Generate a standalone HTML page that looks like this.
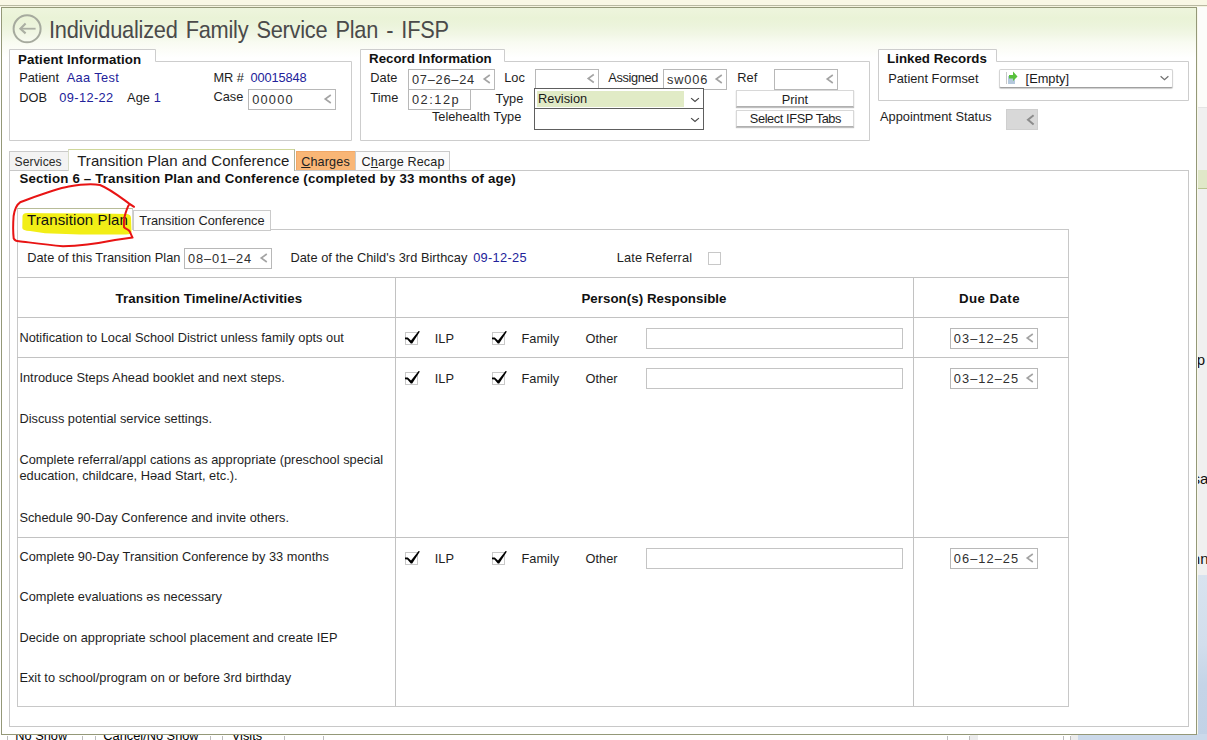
<!DOCTYPE html>
<html><head><meta charset="utf-8"><style>
html,body{margin:0;padding:0;}
body{width:1207px;height:740px;overflow:hidden;position:relative;background:#fff;font-family:"Liberation Sans", sans-serif;}
.t{position:absolute;white-space:nowrap;}
.r{position:absolute;box-sizing:border-box;}
.f{position:absolute;}
svg.s{position:absolute;left:0;top:0;}
</style></head><body>
<div class="f" style="left:0;top:0;width:1207px;height:5px;background:#f9f7e5"></div>
<div class="f" style="left:0px;top:5px;width:1207px;height:1px;background:#b9b9a2;"></div>
<div class="f" style="left:0px;top:6px;width:1207px;height:1px;background:#f6f4e0;"></div>
<div class="f" style="left:1197px;top:7px;width:10px;height:100px;background:#fcfcfa;"></div>
<div class="f" style="left:1197px;top:107px;width:10px;height:1px;background:#e4e4e4;"></div>
<div class="f" style="left:1197px;top:108px;width:10px;height:62px;background:#f0f0f0;"></div>
<div class="f" style="left:1197px;top:170px;width:10px;height:18px;background:#e0e8c8;"></div>
<div class="f" style="left:1197px;top:188px;width:10px;height:1px;background:#b8c490;"></div>
<div class="f" style="left:1197px;top:189px;width:10px;height:386px;background:#f0f0f0;"></div>
<div class="f" style="left:1197px;top:575px;width:10px;height:165px;background:linear-gradient(#d8e3ef 0px,#d2deec 70px,#c4d4e7 110px,#c2d2e6 165px);"></div>
<div class="f" style="left:1197px;top:300px;width:10px;height:275px;overflow:hidden"><div class="t" style="left:-0.2px;top:51.5px;font-size:15px;line-height:15px;color:#111">p</div><div class="t" style="left:-4.6px;top:171.3px;font-size:15px;line-height:15px;color:#111">sa</div><div class="t" style="left:-5.2px;top:251px;font-size:15px;line-height:15px;color:#111">nn</div></div>
<div class="f" style="left:0px;top:734px;width:1207px;height:6px;background:#ffffff;"></div>
<div class="f" style="left:1078px;top:734px;width:129px;height:6px;background:#cbd9ea;"></div>
<div class="f" style="left:7px;top:736px;width:1px;height:4px;background:#bcbcbc;"></div>
<div class="f" style="left:82px;top:736px;width:1px;height:4px;background:#bcbcbc;"></div>
<div class="f" style="left:95px;top:736px;width:1px;height:4px;background:#bcbcbc;"></div>
<div class="f" style="left:210px;top:736px;width:1px;height:4px;background:#bcbcbc;"></div>
<div class="f" style="left:222px;top:736px;width:1px;height:4px;background:#bcbcbc;"></div>
<div class="f" style="left:284px;top:736px;width:1px;height:4px;background:#bcbcbc;"></div>
<div class="f" style="left:323px;top:736px;width:1px;height:4px;background:#bcbcbc;"></div>
<div class="f" style="left:947px;top:736px;width:1px;height:4px;background:#bcbcbc;"></div>
<div class="f" style="left:969px;top:736px;width:1px;height:4px;background:#bcbcbc;"></div>
<div class="f" style="left:1063px;top:736px;width:1px;height:4px;background:#bcbcbc;"></div>
<div class="f" style="left:1070px;top:736px;width:1px;height:4px;background:#bcbcbc;"></div>
<div class="f" style="left:970px;top:735px;width:8px;height:5px;background:#ececec;"></div>
<div class="f" style="left:1071px;top:735px;width:7px;height:5px;background:#ececec;"></div>
<div class="t" style="left:15.30px;top:730.36px;font-size:12.8px;line-height:12.8px;font-weight:normal;color:#000;letter-spacing:0px;">No Show</div>
<div class="t" style="left:103.30px;top:730.36px;font-size:12.8px;line-height:12.8px;font-weight:normal;color:#000;letter-spacing:0px;">Cancel/No Show</div>
<div class="t" style="left:231.80px;top:730.36px;font-size:12.8px;line-height:12.8px;font-weight:normal;color:#000;letter-spacing:0px;">Visits</div>
<div class="f" style="left:1px;top:7px;width:1196px;height:728px;background:#949878"></div>
<div class="f" style="left:2px;top:8px;width:1194px;height:726px;background:linear-gradient(#eef5dd 0px,#eaf3d7 10px,#ecf4dc 18px,#f2f7e6 27px,#f8fbf1 34px,#fcfdf8 42px,#ffffff 50px,#ffffff 100%)"></div>
<div class="f" style="left:1197px;top:8px;width:1px;height:726px;background:#f8f8ea;"></div>
<svg class="s" width="1207" height="740" viewBox="0 0 1207 740"><circle cx="27.1" cy="28.8" r="13.5" fill="none" stroke="#a6aa9e" stroke-width="2"/></svg>
<svg class="s" width="1207" height="740" viewBox="0 0 1207 740"><polyline points="25.6,23.6 20.4,28.7 25.6,33.4" fill="none" stroke="#abafa3" stroke-width="2.1"/></svg>
<svg class="s" width="1207" height="740" viewBox="0 0 1207 740"><line x1="21" y1="28.7" x2="35.6" y2="28.7" stroke="#abafa3" stroke-width="1.8"/></svg>
<div class="t" style="left:48.80px;top:17.91px;font-size:24.2px;line-height:24.2px;font-weight:normal;color:#4a4a4a;letter-spacing:-0.27px;word-spacing:2.6px;transform:scaleX(0.9);transform-origin:0 0;">Individualized Family Service Plan - IFSP</div>
<svg class="s" width="1207" height="740" viewBox="0 0 1207 740"><path d="M9.5,140.5 V49.5 H155.5 V61.5 H351.5 V140.5 Z" fill="#fff" stroke="#cdcdcd" stroke-width="1"/></svg>
<svg class="s" width="1207" height="740" viewBox="0 0 1207 740"><path d="M360.5,140.5 V49.5 H504.5 V61.5 H869.5 V140.5 Z" fill="#fff" stroke="#cdcdcd" stroke-width="1"/></svg>
<svg class="s" width="1207" height="740" viewBox="0 0 1207 740"><path d="M878.5,100.5 V49.5 H996.5 V61.5 H1188.5 V100.5 Z" fill="#fff" stroke="#cdcdcd" stroke-width="1"/></svg>
<div class="t" style="left:18.10px;top:52.74px;font-size:13.3px;line-height:13.3px;font-weight:bold;color:#111;letter-spacing:0.1px;">Patient Information</div>
<div class="t" style="left:19.20px;top:71.56px;font-size:12.8px;line-height:12.8px;font-weight:normal;color:#1e1e1e;letter-spacing:0px;">Patient</div>
<div class="t" style="left:66.70px;top:71.56px;font-size:12.8px;line-height:12.8px;font-weight:normal;color:#22229a;letter-spacing:0.35px;">Aaa Test</div>
<div class="t" style="left:213.40px;top:71.56px;font-size:12.8px;line-height:12.8px;font-weight:normal;color:#1e1e1e;letter-spacing:0px;">MR #</div>
<div class="t" style="left:250.40px;top:71.56px;font-size:12.8px;line-height:12.8px;font-weight:normal;color:#22229a;letter-spacing:-0.1px;">00015848</div>
<div class="t" style="left:19.20px;top:91.66px;font-size:12.8px;line-height:12.8px;font-weight:normal;color:#1e1e1e;letter-spacing:0px;">DOB</div>
<div class="t" style="left:59.20px;top:91.66px;font-size:12.8px;line-height:12.8px;font-weight:normal;color:#22229a;letter-spacing:0.4px;">09-12-22</div>
<div class="t" style="left:127.10px;top:91.66px;font-size:12.8px;line-height:12.8px;font-weight:normal;color:#1e1e1e;letter-spacing:0px;">Age</div>
<div class="t" style="left:153.80px;top:91.66px;font-size:12.8px;line-height:12.8px;font-weight:normal;color:#22229a;letter-spacing:0px;">1</div>
<div class="t" style="left:213.40px;top:91.36px;font-size:12.8px;line-height:12.8px;font-weight:normal;color:#1e1e1e;letter-spacing:0px;">Case</div>
<div class="r" style="left:248px;top:89px;width:88px;height:21px;border:1px solid #b8b8b8;background:#fff;"></div>
<div class="t" style="left:252.20px;top:94.16px;font-size:12.8px;line-height:12.8px;font-weight:normal;color:#303030;letter-spacing:1.2px;">00000</div>
<svg class="s" width="1207" height="740" viewBox="0 0 1207 740"><polyline points="330.8,95.0 325.2,99.0 330.8,103.0" fill="none" stroke="#a4a4a4" stroke-width="1.6"/></svg>
<div class="t" style="left:369.10px;top:52.14px;font-size:13.3px;line-height:13.3px;font-weight:bold;color:#111;letter-spacing:0px;">Record Information</div>
<div class="t" style="left:370.30px;top:71.56px;font-size:12.8px;line-height:12.8px;font-weight:normal;color:#1e1e1e;letter-spacing:0px;">Date</div>
<div class="t" style="left:370.30px;top:91.56px;font-size:12.8px;line-height:12.8px;font-weight:normal;color:#1e1e1e;letter-spacing:0px;">Time</div>
<div class="r" style="left:408px;top:69px;width:87px;height:21px;border:1px solid #b8b8b8;background:#fff;"></div>
<div class="t" style="left:412.00px;top:74.06px;font-size:12.8px;line-height:12.8px;font-weight:normal;color:#303030;letter-spacing:0.75px;">07&ndash;26&ndash;24</div>
<svg class="s" width="1207" height="740" viewBox="0 0 1207 740"><polyline points="489.8,75.0 484.2,79.0 489.8,83.0" fill="none" stroke="#a4a4a4" stroke-width="1.6"/></svg>
<div class="r" style="left:408px;top:89px;width:63px;height:21px;border:1px solid #b8b8b8;background:#fff;"></div>
<div class="t" style="left:412.00px;top:94.06px;font-size:12.8px;line-height:12.8px;font-weight:normal;color:#303030;letter-spacing:1.5px;">02:12p</div>
<div class="t" style="left:504.20px;top:71.66px;font-size:12.8px;line-height:12.8px;font-weight:normal;color:#1e1e1e;letter-spacing:0px;">Loc</div>
<div class="r" style="left:535px;top:69px;width:64px;height:20px;border:1px solid #b8b8b8;background:#fff;"></div>
<svg class="s" width="1207" height="740" viewBox="0 0 1207 740"><polyline points="593.8,74.5 588.1999999999999,78.5 593.8,82.5" fill="none" stroke="#a4a4a4" stroke-width="1.6"/></svg>
<div class="t" style="left:608.30px;top:71.66px;font-size:12.8px;line-height:12.8px;font-weight:normal;color:#1e1e1e;letter-spacing:-0.35px;">Assigned</div>
<div class="r" style="left:663px;top:69px;width:64px;height:21px;border:1px solid #b8b8b8;background:#fff;"></div>
<div class="t" style="left:666.90px;top:74.06px;font-size:12.8px;line-height:12.8px;font-weight:normal;color:#303030;letter-spacing:0.9px;">sw006</div>
<svg class="s" width="1207" height="740" viewBox="0 0 1207 740"><polyline points="721.8,75.0 716.1999999999999,79.0 721.8,83.0" fill="none" stroke="#a4a4a4" stroke-width="1.6"/></svg>
<div class="t" style="left:737.30px;top:71.76px;font-size:12.8px;line-height:12.8px;font-weight:normal;color:#1e1e1e;letter-spacing:0px;">Ref</div>
<div class="r" style="left:774px;top:69px;width:64px;height:21px;border:1px solid #b8b8b8;background:#fff;"></div>
<svg class="s" width="1207" height="740" viewBox="0 0 1207 740"><polyline points="832.8,75.0 827.1999999999999,79.0 832.8,83.0" fill="none" stroke="#a4a4a4" stroke-width="1.6"/></svg>
<div class="t" style="left:495.60px;top:93.46px;font-size:12.8px;line-height:12.8px;font-weight:normal;color:#1e1e1e;letter-spacing:0px;">Type</div>
<div class="t" style="left:431.90px;top:111.36px;font-size:12.8px;line-height:12.8px;font-weight:normal;color:#1e1e1e;letter-spacing:0px;">Telehealth Type</div>
<div class="r" style="left:534px;top:88px;width:170px;height:21px;border:1px solid #5e5e5e;background:#fff;"></div>
<div class="f" style="left:537px;top:91px;width:147px;height:15.5px;background:#e1ebc6;"></div>
<div class="t" style="left:538.10px;top:93.46px;font-size:12.8px;line-height:12.8px;font-weight:normal;color:#1a1a1a;letter-spacing:0px;">Revision</div>
<svg class="s" width="1207" height="740" viewBox="0 0 1207 740"><polyline points="691.1,98.1 695,101.5 698.9,98.1" fill="none" stroke="#4a4a4a" stroke-width="1.25"/></svg>
<div class="r" style="left:534px;top:108px;width:170px;height:22px;border:1px solid #5e5e5e;background:#fff;"></div>
<svg class="s" width="1207" height="740" viewBox="0 0 1207 740"><polyline points="691.1,118.1 695,121.5 698.9,118.1" fill="none" stroke="#4a4a4a" stroke-width="1.25"/></svg>
<div class="r" style="left:736px;top:90px;width:118px;height:17px;border:1px solid #d8d8d8;border-bottom:1px solid #b0b0b0;box-shadow:0 1px 1px rgba(0,0,0,0.25);background:#fff"></div>
<div class="t" style="left:781.80px;top:93.66px;font-size:12.8px;line-height:12.8px;font-weight:normal;color:#1e1e1e;letter-spacing:0px;">Print</div>
<div class="r" style="left:736px;top:110px;width:118px;height:17px;border:1px solid #d8d8d8;border-bottom:1px solid #b0b0b0;box-shadow:0 1px 1px rgba(0,0,0,0.25);background:#fff"></div>
<div class="t" style="left:749.80px;top:113.36px;font-size:12.8px;line-height:12.8px;font-weight:normal;color:#1e1e1e;letter-spacing:0px;"><span style="letter-spacing:-0.4px">Select IFSP Tabs</span></div>
<div class="t" style="left:887.10px;top:52.44px;font-size:13.3px;line-height:13.3px;font-weight:bold;color:#111;letter-spacing:0px;">Linked Records</div>
<div class="t" style="left:888.20px;top:73.26px;font-size:12.8px;line-height:12.8px;font-weight:normal;color:#1e1e1e;letter-spacing:0px;">Patient Formset</div>
<div class="r" style="left:999px;top:69px;width:174px;height:19px;border:1px solid #d4d4d4;border-bottom:1px solid #a0a0a0;border-radius:2px;box-shadow:0 1px 1px rgba(0,0,0,0.2);background:#fff"></div>
<svg class="s" width="1207" height="740" viewBox="0 0 1207 740"><line x1="1006.5" y1="72" x2="1006.5" y2="84" stroke="#c8c8c8" stroke-width="1"/><rect x="1008" y="76" width="7" height="8" fill="#b4c8dc"/><polygon points="1009,75 1013,75 1013,71.5 1017.5,76.5 1013,81 1013,78.5 1009,78.5" fill="#58c03c"/></svg>
<div class="t" style="left:1025.60px;top:73.36px;font-size:12.8px;line-height:12.8px;font-weight:normal;color:#1a1a1a;letter-spacing:0px;">[Empty]</div>
<svg class="s" width="1207" height="740" viewBox="0 0 1207 740"><polyline points="1160.6,76.3 1164.5,79.7 1168.4,76.3" fill="none" stroke="#707070" stroke-width="1.25"/></svg>
<div class="t" style="left:880.00px;top:111.46px;font-size:12.8px;line-height:12.8px;font-weight:normal;color:#1e1e1e;letter-spacing:0px;">Appointment Status</div>
<div class="r" style="left:1006px;top:109px;width:32px;height:21px;border:1px solid #cfcfcf;background:#d8d8d8;"></div>
<svg class="s" width="1207" height="740" viewBox="0 0 1207 740"><polyline points="1033.6,115.2 1028,119.8 1033.6,124.4" fill="none" stroke="#8c8c8c" stroke-width="2"/></svg>
<div class="r" style="left:9px;top:151px;width:60px;height:21px;border:1px solid #cacaca;background:#f3f3f3;"></div>
<div class="t" style="left:14.60px;top:155.96px;font-size:12.1px;line-height:12.1px;font-weight:normal;color:#2a2a2a;letter-spacing:0.1px;">Services</div>
<div class="r" style="left:296px;top:151px;width:60px;height:21px;border:1px solid #f0a868;background:#f9b676;"></div>
<div class="t" style="left:301.20px;top:156.03px;font-size:12.6px;line-height:12.6px;font-weight:normal;color:#222;letter-spacing:0.15px;"><u>C</u>harges</div>
<div class="r" style="left:355px;top:151px;width:95px;height:21px;border:1px solid #cacaca;background:#fbfbfb;"></div>
<div class="t" style="left:361.60px;top:156.03px;font-size:12.6px;line-height:12.6px;font-weight:normal;color:#222;letter-spacing:0.15px;">C<u>h</u>arge Recap</div>
<div class="r" style="left:9px;top:170px;width:1180px;height:557px;border:1px solid #c8c8c8;background:#fff;"></div>
<div class="r" style="left:68px;top:149px;width:227px;height:22px;border:1px solid #d8dcc8;border-right:1px solid #aeb29a;border-top:1px solid #cfd79a;border-bottom:none;background:#fff"></div>
<div class="t" style="left:77.20px;top:153.40px;font-size:15px;line-height:15px;font-weight:normal;color:#1c1c1c;letter-spacing:0.06px;">Transition Plan and Conference</div>
<div class="t" style="left:19.40px;top:171.94px;font-size:13.3px;line-height:13.3px;font-weight:bold;color:#111;letter-spacing:0.16px;">Section 6 &ndash; Transition Plan and Conference (completed by 33 months of age)</div>
<div class="r" style="left:17px;top:229px;width:1052px;height:478px;border:1px solid #c8c8c8;background:#fff;"></div>
<div class="r" style="left:133px;top:210px;width:138px;height:21px;border:1px solid #cacaca;background:#fcfcfc;"></div>
<div class="t" style="left:139.30px;top:214.96px;font-size:12.8px;line-height:12.8px;font-weight:normal;color:#1e1e1e;letter-spacing:-0.01px;">Transition Conference</div>
<div class="r" style="left:17px;top:208px;width:116px;height:22px;border:1px solid #d0d0d0;border-top:1px solid #b8bc98;border-bottom:none;background:#fff"></div>
<svg class="s" width="1207" height="740" viewBox="0 0 1207 740"><path d="M22.5,216 Q23,213 27,213 L45,213.3 L100,213.6 L127,214 Q131,214.5 131,218 L131.5,232 Q131,234.5 126,234.5 L80,234.6 L45,233.2 L30,231 Q22.5,230.5 22.3,228 Z" fill="#f2ee16"/></svg>
<div class="t" style="left:27.00px;top:211.60px;font-size:15px;line-height:15px;font-weight:normal;color:#111;letter-spacing:0.1px;">Transition Plan</div>
<div class="t" style="left:27.20px;top:252.36px;font-size:12.8px;line-height:12.8px;font-weight:normal;color:#1e1e1e;letter-spacing:0.01px;">Date of this Transition Plan</div>
<div class="r" style="left:184px;top:248px;width:88px;height:21px;border:1px solid #b8b8b8;background:#fff;"></div>
<div class="t" style="left:188.00px;top:253.16px;font-size:12.8px;line-height:12.8px;font-weight:normal;color:#303030;letter-spacing:0.9px;">08&ndash;01&ndash;24</div>
<svg class="s" width="1207" height="740" viewBox="0 0 1207 740"><polyline points="266.8,254.0 261.2,258.0 266.8,262.0" fill="none" stroke="#a4a4a4" stroke-width="1.6"/></svg>
<div class="t" style="left:290.40px;top:252.16px;font-size:12.8px;line-height:12.8px;font-weight:normal;color:#1e1e1e;letter-spacing:0.03px;">Date of the Child's 3rd Birthcay</div>
<div class="t" style="left:473.20px;top:252.16px;font-size:12.8px;line-height:12.8px;font-weight:normal;color:#22229a;letter-spacing:0.3px;">09-12-25</div>
<div class="t" style="left:616.80px;top:252.16px;font-size:12.8px;line-height:12.8px;font-weight:normal;color:#1e1e1e;letter-spacing:0.1px;">Late Referral</div>
<div class="r" style="left:708px;top:252px;width:13px;height:13px;border:1px solid #c8c8c8;background:#fff;"></div>
<div class="f" style="left:17px;top:277px;width:1052px;height:1px;background:#c2c2c2;"></div>
<div class="f" style="left:17px;top:317px;width:1052px;height:1px;background:#c2c2c2;"></div>
<div class="f" style="left:17px;top:357px;width:1052px;height:1px;background:#c2c2c2;"></div>
<div class="f" style="left:17px;top:537px;width:1052px;height:1px;background:#c2c2c2;"></div>
<div class="f" style="left:395px;top:277px;width:1px;height:429px;background:#c2c2c2;"></div>
<div class="f" style="left:913px;top:277px;width:1px;height:429px;background:#c2c2c2;"></div>
<div class="t" style="left:115.50px;top:292.04px;font-size:13.3px;line-height:13.3px;font-weight:bold;color:#111;letter-spacing:0.1px;">Transition Timeline/Activities</div>
<div class="t" style="left:581.40px;top:291.84px;font-size:13.3px;line-height:13.3px;font-weight:bold;color:#111;letter-spacing:0.05px;">Person(s) Responsible</div>
<div class="t" style="left:959.10px;top:291.84px;font-size:13.3px;line-height:13.3px;font-weight:bold;color:#111;letter-spacing:0.4px;">Due Date</div>
<div class="r" style="left:405px;top:332px;width:13px;height:13px;border:1px solid #c8c8c8;background:#fff;"></div>
<svg class="s" width="1207" height="740" viewBox="0 0 1207 740"><polygon points="405.0,337.6 407.8,337.6 411.0,340.6 418.6,331.0 419.9,331.5 412.2,343.4 410.8,343.4 407.4,339.4 405.0,339.2" fill="#000"/></svg>
<div class="t" style="left:434.80px;top:332.96px;font-size:12.8px;line-height:12.8px;font-weight:normal;color:#1e1e1e;letter-spacing:0px;">ILP</div>
<div class="r" style="left:492px;top:332px;width:13px;height:13px;border:1px solid #c8c8c8;background:#fff;"></div>
<svg class="s" width="1207" height="740" viewBox="0 0 1207 740"><polygon points="492.0,337.6 494.8,337.6 498.0,340.6 505.6,331.0 506.9,331.5 499.2,343.4 497.8,343.4 494.4,339.4 492.0,339.2" fill="#000"/></svg>
<div class="t" style="left:521.50px;top:332.96px;font-size:12.8px;line-height:12.8px;font-weight:normal;color:#1e1e1e;letter-spacing:0px;">Family</div>
<div class="t" style="left:585.60px;top:332.96px;font-size:12.8px;line-height:12.8px;font-weight:normal;color:#1e1e1e;letter-spacing:0px;">Other</div>
<div class="r" style="left:646px;top:328px;width:257px;height:21px;border:1px solid #c4c4c4;background:#fff;"></div>
<div class="r" style="left:950px;top:328px;width:88px;height:21px;border:1px solid #b8b8b8;background:#fff;"></div>
<div class="t" style="left:953.80px;top:333.36px;font-size:12.8px;line-height:12.8px;font-weight:normal;color:#303030;letter-spacing:1.05px;">03&ndash;12&ndash;25</div>
<svg class="s" width="1207" height="740" viewBox="0 0 1207 740"><polyline points="1032.8,334.0 1027.2,338.0 1032.8,342.0" fill="none" stroke="#a4a4a4" stroke-width="1.6"/></svg>
<div class="r" style="left:405px;top:372px;width:13px;height:13px;border:1px solid #c8c8c8;background:#fff;"></div>
<svg class="s" width="1207" height="740" viewBox="0 0 1207 740"><polygon points="405.0,377.6 407.8,377.6 411.0,380.6 418.6,371.0 419.9,371.5 412.2,383.4 410.8,383.4 407.4,379.4 405.0,379.2" fill="#000"/></svg>
<div class="t" style="left:434.80px;top:372.96px;font-size:12.8px;line-height:12.8px;font-weight:normal;color:#1e1e1e;letter-spacing:0px;">ILP</div>
<div class="r" style="left:492px;top:372px;width:13px;height:13px;border:1px solid #c8c8c8;background:#fff;"></div>
<svg class="s" width="1207" height="740" viewBox="0 0 1207 740"><polygon points="492.0,377.6 494.8,377.6 498.0,380.6 505.6,371.0 506.9,371.5 499.2,383.4 497.8,383.4 494.4,379.4 492.0,379.2" fill="#000"/></svg>
<div class="t" style="left:521.50px;top:372.96px;font-size:12.8px;line-height:12.8px;font-weight:normal;color:#1e1e1e;letter-spacing:0px;">Family</div>
<div class="t" style="left:585.60px;top:372.96px;font-size:12.8px;line-height:12.8px;font-weight:normal;color:#1e1e1e;letter-spacing:0px;">Other</div>
<div class="r" style="left:646px;top:368px;width:257px;height:21px;border:1px solid #c4c4c4;background:#fff;"></div>
<div class="r" style="left:950px;top:368px;width:88px;height:21px;border:1px solid #b8b8b8;background:#fff;"></div>
<div class="t" style="left:953.80px;top:373.36px;font-size:12.8px;line-height:12.8px;font-weight:normal;color:#303030;letter-spacing:1.05px;">03&ndash;12&ndash;25</div>
<svg class="s" width="1207" height="740" viewBox="0 0 1207 740"><polyline points="1032.8,374.0 1027.2,378.0 1032.8,382.0" fill="none" stroke="#a4a4a4" stroke-width="1.6"/></svg>
<div class="r" style="left:405px;top:552px;width:13px;height:13px;border:1px solid #c8c8c8;background:#fff;"></div>
<svg class="s" width="1207" height="740" viewBox="0 0 1207 740"><polygon points="405.0,557.6 407.8,557.6 411.0,560.6 418.6,551.0 419.9,551.5 412.2,563.4 410.8,563.4 407.4,559.4 405.0,559.2" fill="#000"/></svg>
<div class="t" style="left:434.80px;top:552.96px;font-size:12.8px;line-height:12.8px;font-weight:normal;color:#1e1e1e;letter-spacing:0px;">ILP</div>
<div class="r" style="left:492px;top:552px;width:13px;height:13px;border:1px solid #c8c8c8;background:#fff;"></div>
<svg class="s" width="1207" height="740" viewBox="0 0 1207 740"><polygon points="492.0,557.6 494.8,557.6 498.0,560.6 505.6,551.0 506.9,551.5 499.2,563.4 497.8,563.4 494.4,559.4 492.0,559.2" fill="#000"/></svg>
<div class="t" style="left:521.50px;top:552.96px;font-size:12.8px;line-height:12.8px;font-weight:normal;color:#1e1e1e;letter-spacing:0px;">Family</div>
<div class="t" style="left:585.60px;top:552.96px;font-size:12.8px;line-height:12.8px;font-weight:normal;color:#1e1e1e;letter-spacing:0px;">Other</div>
<div class="r" style="left:646px;top:548px;width:257px;height:21px;border:1px solid #c4c4c4;background:#fff;"></div>
<div class="r" style="left:950px;top:548px;width:88px;height:21px;border:1px solid #b8b8b8;background:#fff;"></div>
<div class="t" style="left:953.80px;top:553.36px;font-size:12.8px;line-height:12.8px;font-weight:normal;color:#303030;letter-spacing:1.05px;">06&ndash;12&ndash;25</div>
<svg class="s" width="1207" height="740" viewBox="0 0 1207 740"><polyline points="1032.8,554.0 1027.2,558.0 1032.8,562.0" fill="none" stroke="#a4a4a4" stroke-width="1.6"/></svg>
<div class="t" style="left:19.40px;top:332.26px;font-size:12.8px;line-height:12.8px;font-weight:normal;color:#1e1e1e;letter-spacing:0.015px;">Notification to Local School District unless family opts out</div>
<div class="t" style="left:19.40px;top:372.26px;font-size:12.8px;line-height:12.8px;font-weight:normal;color:#1e1e1e;letter-spacing:0.015px;">Introduce Steps Ahead booklet and next steps.</div>
<div class="t" style="left:19.40px;top:412.76px;font-size:12.8px;line-height:12.8px;font-weight:normal;color:#1e1e1e;letter-spacing:0.015px;">Discuss potential service settings.</div>
<div class="t" style="left:19.40px;top:454.16px;font-size:12.8px;line-height:12.8px;font-weight:normal;color:#1e1e1e;letter-spacing:0.015px;">Complete referral/appl cations as appropriate (preschool special</div>
<div class="t" style="left:19.40px;top:469.96px;font-size:12.8px;line-height:12.8px;font-weight:normal;color:#1e1e1e;letter-spacing:0.015px;">education, childcare, H&#x259;ad Start, etc.).</div>
<div class="t" style="left:19.40px;top:512.16px;font-size:12.8px;line-height:12.8px;font-weight:normal;color:#1e1e1e;letter-spacing:0.015px;">Schedule 90-Day Conference and invite others.</div>
<div class="t" style="left:19.40px;top:551.46px;font-size:12.8px;line-height:12.8px;font-weight:normal;color:#1e1e1e;letter-spacing:0.015px;">Complete 90-Day Transition Conference by 33 months</div>
<div class="t" style="left:19.40px;top:591.26px;font-size:12.8px;line-height:12.8px;font-weight:normal;color:#1e1e1e;letter-spacing:0.015px;">Complete evaluations &#x259;s necessary</div>
<div class="t" style="left:19.40px;top:631.56px;font-size:12.8px;line-height:12.8px;font-weight:normal;color:#1e1e1e;letter-spacing:0.015px;">Decide on appropriate school placement and create IEP</div>
<div class="t" style="left:19.40px;top:671.56px;font-size:12.8px;line-height:12.8px;font-weight:normal;color:#1e1e1e;letter-spacing:0.015px;">Exit to school/program on or before 3rd birthday</div>
<svg class="s" width="1207" height="740" viewBox="0 0 1207 740"><path d="M134,206.8 L129.2,203.6 C120,197 110,189 100,185 C92,183.5 80,184.5 68.8,186.6 C55,189 40,195 20.1,202.3 C16,205 14.5,210 13.6,216 C13,224 13,232 13.7,238.5 C15,240.8 17,241.2 19,241.2 C30,242.5 45,244.5 63,246.3 C80,246 100,243 115,240 C122,239 128,238.2 132.6,237.6 C131,234.5 130,231.5 129,230.6 C127,229 125,228.5 124,227.2 C123.8,223 124,219 124.5,217 C125.5,213 127,208 129.3,204 C131,204.8 132.5,205.6 134,206.8" fill="none" stroke="#e81414" stroke-width="2" stroke-linejoin="round" stroke-linecap="round"/></svg>
</body></html>
